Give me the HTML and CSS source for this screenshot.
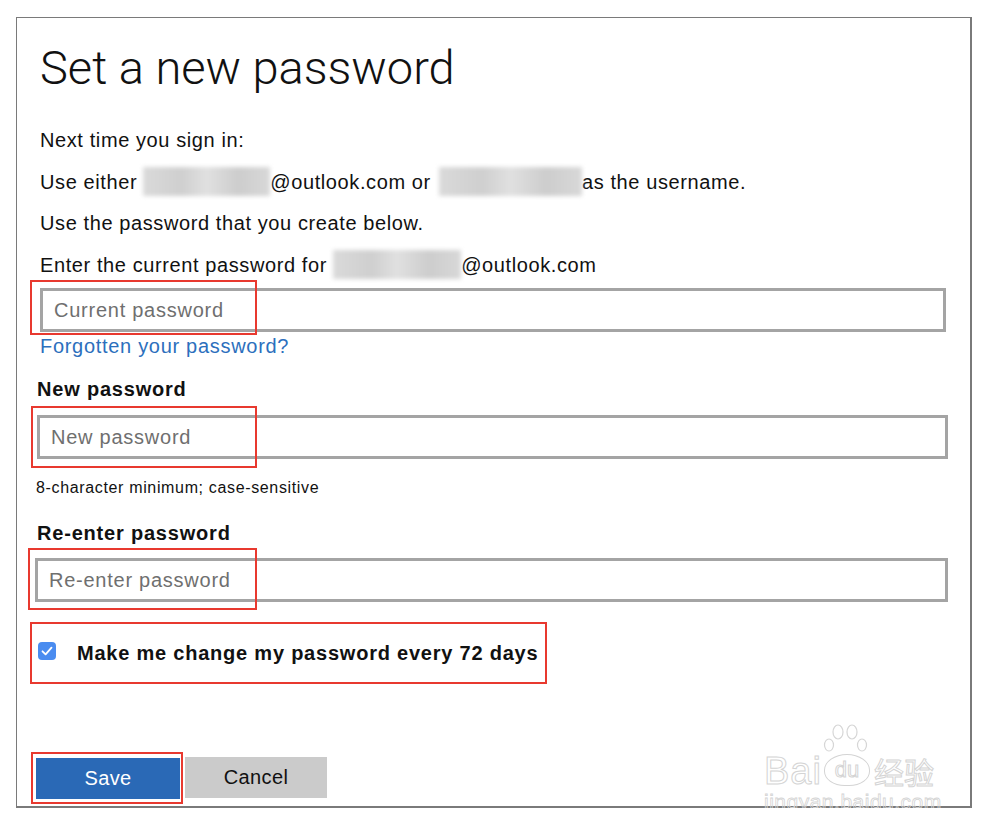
FILE: index.html
```html
<!DOCTYPE html>
<html lang="en">
<head>
<meta charset="utf-8">
<title>Set a new password</title>
<link rel="stylesheet" href="styles.css">
</head>
<body>
<div class="frame">
  <h1 class="title">Set a new password</h1>
  <p class="line">Next time you sign in:</p>
  <p class="line">Use either <span class="blur b1"></span>@outlook.com or <span class="blur b2"></span>as the username.</p>
  <p class="line">Use the password that you create below.</p>
  <p class="line">Enter the current password for <span class="blur b3"></span>@outlook.com</p>

  <div class="field field-current">
    <div class="input">Current password</div>
    <span class="mark mark-1"></span>
  </div>
  <a class="link" href="#">Forgotten your password?</a>

  <div class="label">New password</div>
  <div class="field field-new">
    <div class="input">New password</div>
    <span class="mark mark-2"></span>
  </div>
  <div class="hint">8-character minimum; case-sensitive</div>

  <div class="label label-re">Re-enter password</div>
  <div class="field field-re">
    <div class="input">Re-enter password</div>
    <span class="mark mark-3"></span>
  </div>

  <div class="check-row">
    <span class="checkbox">
      <svg width="18" height="18" viewBox="0 0 18 18"><path d="M4.5 9.3 L7.6 12.4 L13.5 5.6" fill="none" stroke="#fff" stroke-width="1.8" stroke-linecap="round" stroke-linejoin="round"/></svg>
    </span>
    <span class="check-label">Make me change my password every 72 days</span>
  </div>

  <div class="buttons">
    <div class="save-mark"><button class="btn btn-save">Save</button></div>
    <button class="btn btn-cancel">Cancel</button>
  </div>

  <div class="watermark">
    <div class="wm-top">
      <span class="wm-bai">Bai</span>
      <span class="wm-du">
        <svg class="wm-paw" width="50" height="34" viewBox="0 0 50 34"><g fill="none" stroke="#d6d6d6" stroke-width="1.2"><ellipse cx="8" cy="22" rx="4.5" ry="6"/><ellipse cx="17" cy="9" rx="5" ry="7"/><ellipse cx="31" cy="9" rx="5" ry="7"/><ellipse cx="41" cy="22" rx="4.5" ry="6"/></g></svg>
        <span class="wm-du-text">du</span>
      </span>
      <span class="wm-cn">经验</span>
    </div>
    <div class="wm-url">jingyan.baidu.com</div>
  </div>
</div>
</body>
</html>
```

FILE: styles.css
```css
html, body {
  margin: 0;
  padding: 0;
  background: #fff;
}
body {
  font-family: "Liberation Sans", Arial, sans-serif;
  color: #111;
}
.frame {
  position: relative;
  box-sizing: border-box;
  margin: 17px 0 0 16px;
  width: 956px;
  height: 791px;
  border: 1.5px solid #7a7a7a;
  border-right-width: 2px;
  border-bottom-width: 2px;
  padding: 22px 0 0 23px;
}
.title {
  margin: 0;
  font-family: "Roboto", "Liberation Sans", sans-serif;
  font-weight: 300;
  font-size: 47px;
  line-height: 56px;
  height: 56px;
  color: #111;
  letter-spacing: 0;
}
.line {
  margin: 0;
  font-size: 20px;
  letter-spacing: 0.6px;
  line-height: 41.5px;
  height: 41.5px;
  white-space: nowrap;
}
.title + .line {
  margin-top: 24px;
}
.blur {
  display: inline-block;
  vertical-align: middle;
  height: 29px;
  background: linear-gradient(90deg, #dadada, #cfcfcf 30%, #e0e0e0 50%, #cdcdcd 75%, #d8d8d8);
  filter: blur(2px);
  margin-top: -4px;
}
.b1 { width: 127px; }
.b2 { width: 143px; margin-left: 2px; }
.b3 { width: 128px; }

.field {
  position: relative;
}
.input {
  box-sizing: border-box;
  height: 44px;
  border: 3px solid #a4a4a4;
  background: #fff;
  font-size: 20px;
  letter-spacing: 0.75px;
  color: #6f6f6f;
  line-height: 38px;
  padding-left: 11px;
}
.field-current {
  margin-top: 2px;
  width: 906px;
}
.field-new {
  margin-top: 14px;
  margin-left: -3px;
  width: 911px;
}
.field-re {
  margin-top: 13px;
  margin-left: -5px;
  width: 913px;
}
.mark {
  position: absolute;
  border: 2px solid #e8392f;
  box-sizing: border-box;
}
.mark-1 { left: -10px; top: -8px; width: 227px; height: 55px; }
.mark-2 { left: -6px; top: -9px; width: 226px; height: 62px; }
.mark-3 { left: -7px; top: -10px; width: 229px; height: 62px; }

.link {
  display: block;
  font-size: 20px;
  letter-spacing: 0.7px;
  line-height: 24px;
  margin-top: 2px;
  color: #2c6fbd;
  text-decoration: none;
  width: max-content;
}
.label {
  margin-top: 19px;
  margin-left: -3px;
  font-weight: bold;
  font-size: 20px;
  letter-spacing: 0.8px;
  line-height: 24px;
}
.label-re {
  margin-top: 23px;
}
.hint {
  margin-top: 19px;
  margin-left: -4px;
  font-size: 16px;
  letter-spacing: 0.65px;
  line-height: 20px;
}
.check-row {
  box-sizing: border-box;
  display: flex;
  align-items: center;
  margin-top: 20px;
  margin-left: -10px;
  width: 517px;
  height: 62px;
  border: 2px solid #e8392f;
  padding-left: 6px;
}
.checkbox {
  display: flex;
  width: 18px;
  height: 18px;
  border-radius: 4px;
  background: #4a8cf0;
  margin-top: -5px;
}
.check-label {
  margin-left: 21px;
  font-weight: bold;
  font-size: 20px;
  letter-spacing: 0.78px;
}
.buttons {
  display: flex;
  align-items: center;
  margin-top: 68px;
  margin-left: -9px;
}
.save-mark {
  box-sizing: border-box;
  border: 2px solid #e8392f;
  padding: 4px 1px 3px 3px;
}
.btn {
  box-sizing: border-box;
  border: none;
  margin: 0;
  font-family: "Liberation Sans", Arial, sans-serif;
  font-size: 20px;
  letter-spacing: 0.4px;
  height: 41px;
  width: 144px;
  padding: 0;
}
.btn-save {
  display: block;
  background: #2a69b6;
  color: #fff;
}
.btn-cancel {
  margin-left: 2px;
  width: 142px;
  background: #cbcbcb;
  color: #111;
  margin-top: -1px;
}

.watermark {
  position: absolute;
  right: 26px;
  bottom: -8px;
  width: 180px;
  color: transparent;
  pointer-events: none;
}
.wm-top {
  display: flex;
  align-items: flex-end;
  height: 60px;
}
.wm-bai {
  font-family: "Liberation Sans", sans-serif;
  font-size: 38px;
  line-height: 38px;
  -webkit-text-stroke: 1px #d4d4d4;
  letter-spacing: 1px;
}
.wm-du {
  position: relative;
  display: inline-flex;
  justify-content: center;
  align-items: center;
  width: 44px;
  height: 30px;
  margin-left: 2px;
  margin-bottom: 4px;
  border: 1.2px solid #d4d4d4;
  border-radius: 50% 50% 45% 45%;
}
.wm-paw {
  position: absolute;
  left: -4px;
  top: -32px;
}
.wm-du-text {
  font-size: 22px;
  -webkit-text-stroke: 1px #d4d4d4;
}
.wm-cn {
  font-family: "Noto Sans CJK SC", sans-serif;
  font-size: 30px;
  line-height: 38px;
  margin-left: 4px;
  -webkit-text-stroke: 1px #d4d4d4;
}
.wm-url {
  font-size: 21px;
  line-height: 24px;
  -webkit-text-stroke: 0.8px #d4d4d4;
  letter-spacing: 0.5px;
}
```
